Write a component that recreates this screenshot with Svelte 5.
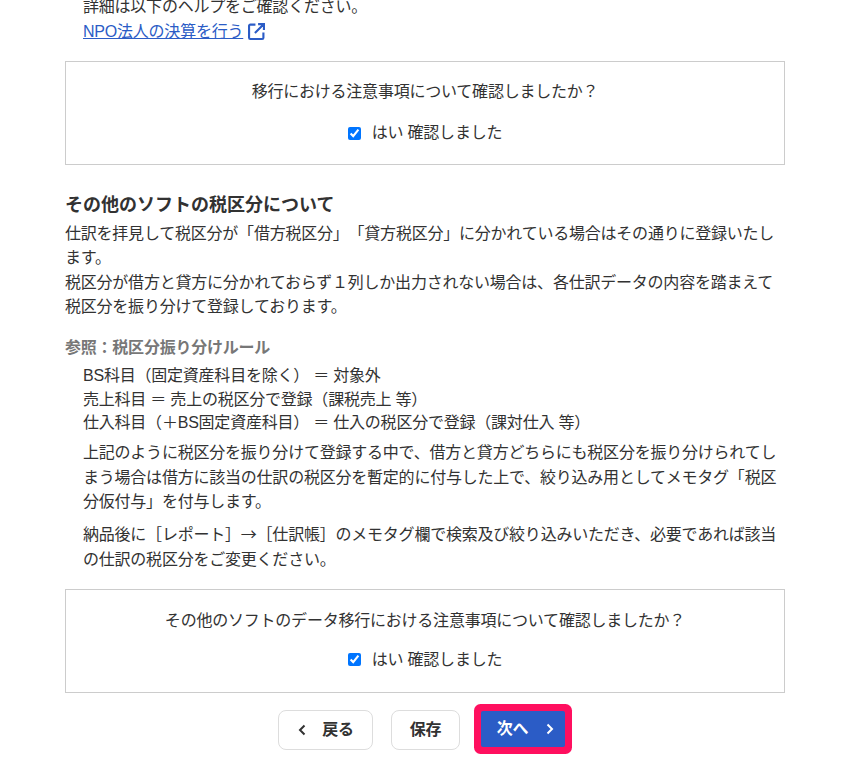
<script>
  let migrationChecked = $state(true);
  let otherChecked = $state(true);
</script>

<div class="page">
  <div class="indent">
    <p>詳細は以下のヘルプをご確認ください。</p>
    <p class="link">
      <a href="#npo">NPO法人の決算を行う</a>
      <svg class="ext" viewBox="1 1 16 16" width="17" height="17" aria-hidden="true">
        <path d="M8 2.5H3.2a1.2 1.2 0 0 0-1.2 1.2v11.1A1.2 1.2 0 0 0 3.2 16h11.1a1.2 1.2 0 0 0 1.2-1.2V10M10.5 2H16v5.5M16 2 7.5 10.5" fill="none" stroke="#2b5cc6" stroke-width="2"/>
      </svg>
    </p>
  </div>

  <div class="confirm first">
    <div class="question">移行における注意事項について確認しましたか？</div>
    <label class="check"><input type="checkbox" bind:checked={migrationChecked} />はい 確認しました</label>
  </div>

  <h2>その他のソフトの税区分について</h2>
  <p>仕訳を拝見して税区分が「借方税区分」「貸方税区分」に分かれている場合はその通りに登録いたします。</p>
  <p>税区分が借方と貸方に分かれておらず１列しか出力されない場合は、各仕訳データの内容を踏まえて税区分を振り分けて登録しております。</p>

  <h3>参照：税区分振り分けルール</h3>
  <div class="indent">
    <p class="rule">BS科目（固定資産科目を除く） ＝ 対象外</p>
    <p class="rule">売上科目 ＝ 売上の税区分で登録（課税売上 等）</p>
    <p class="rule">仕入科目（＋BS固定資産科目） ＝ 仕入の税区分で登録（課対仕入 等）</p>
    <p class="para">上記のように税区分を振り分けて登録する中で、借方と貸方どちらにも税区分を振り分けられてしまう場合は借方に該当の仕訳の税区分を暫定的に付与した上で、絞り込み用としてメモタグ「税区分仮付与」を付与します。</p>
    <p class="para">納品後に［レポート］<span class="arrow">→</span>［仕訳帳］のメモタグ欄で検索及び絞り込みいただき、必要であれば該当の仕訳の税区分をご変更ください。</p>
  </div>

  <div class="confirm second">
    <div class="question">その他のソフトのデータ移行における注意事項について確認しましたか？</div>
    <label class="check"><input type="checkbox" bind:checked={otherChecked} />はい 確認しました</label>
  </div>

  <div class="actions">
    <button class="btn back">
      <svg viewBox="0 0 10 14" width="10" height="14" aria-hidden="true"><path d="M7.5 2.5 3 7l4.5 4.5" fill="none" stroke="#323232" stroke-width="2"/></svg>
      戻る
    </button>
    <button class="btn save">保存</button>
    <button class="btn next">
      次へ
      <svg viewBox="0 0 10 14" width="10" height="14" aria-hidden="true"><path d="M2.5 2.5 7 7l-4.5 4.5" fill="none" stroke="#fff" stroke-width="2"/></svg>
    </button>
  </div>
</div>

<style>
  :global(body) {
    margin: 0;
    background: #fff;
    color: #323232;
    font-family: "Liberation Sans", "Noto Sans CJK JP", sans-serif;
    font-size: 16px;
    line-height: 24.4px;
  }

  .page {
    width: 720px;
    margin: -5px 0 0 65px;
    padding-bottom: 20px;
    letter-spacing: -0.22px;
    text-spacing-trim: space-all;
  }

  p {
    margin: 0;
  }

  .indent {
    padding-left: 18px;
  }

  .link {
    margin-top: 1px;
  }

  a {
    color: #2b5cc6;
  }

  .ext {
    vertical-align: -3px;
  }

  .arrow {
    font-family: "Noto Sans CJK JP", sans-serif;
  }

  .confirm {
    border: 1px solid #ccc;
    height: 104px;
    box-sizing: border-box;
    display: flex;
    flex-direction: column;
    align-items: center;
    padding-top: 18px;
  }

  .first {
    margin-top: 16px;
  }

  .second {
    margin-top: 17px;
    padding-top: 19px;
  }

  .question {
    margin-bottom: 17px;
  }

  .second .question {
    margin-bottom: 14px;
  }

  .check {
    display: flex;
    align-items: center;
    gap: 11px;
  }

  .check input {
    margin: 0;
    width: 13px;
    height: 13px;
  }

  h2 {
    font-size: 18px;
    line-height: 27px;
    letter-spacing: 0;
    margin: 27px 0 3px;
  }

  h3 {
    font-size: 16px;
    line-height: 24px;
    color: #777;
    margin: 17px 0 4px;
  }

  .rule {
    line-height: 23.4px;
  }

  .para {
    margin-top: 6.6px;
  }

  .para + .para {
    margin-top: 7px;
  }

  .actions {
    display: flex;
    justify-content: center;
    gap: 18px;
    margin-top: 17px;
    align-items: center;
  }

  .btn {
    font: inherit;
    font-weight: 700;
    letter-spacing: inherit;
    height: 40px;
    border-radius: 8px;
    border: 1px solid #ddd;
    background: #fff;
    color: #323232;
    display: flex;
    align-items: center;
    justify-content: center;
    padding: 0;
  }

  .back {
    width: 95px;
    gap: 15px;
  }

  .save {
    width: 69px;
  }

  .next {
    width: 84px;
    height: 36px;
    margin: 0 7px 2px 3px;
    padding-left: 6px;
    background: #2b5cc6;
    color: #fff;
    border: 0;
    border-radius: 2px;
    box-shadow: 0 0 0 7px #ff0f5f;
    gap: 17px;
  }
</style>
